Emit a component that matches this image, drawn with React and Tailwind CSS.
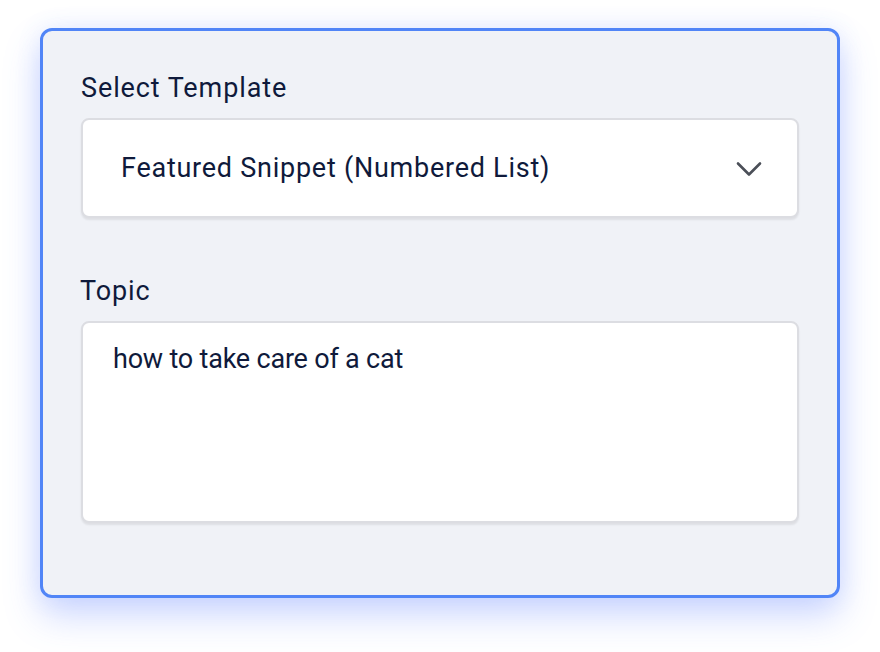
export default function App() {
  return (
    <div className="min-h-[652px] w-[880px] bg-white pt-[28px] px-[40px]" style={{ fontFamily: 'Roboto, "Liberation Sans", sans-serif' }}>
      <div className="h-[570px] rounded-[12px] border-[3px] border-[#5185f7] bg-[#f0f2f7] px-[38px] pt-[41px] shadow-[0_18px_36px_rgba(82,120,255,0.28),0_0_24px_rgba(82,120,255,0.12)]">
        <label className="block text-[27px] font-normal leading-[32px] tracking-[0.9px] text-[#0f1a3b]">Select Template</label>
        <div className="mt-[14px] flex h-[100px] items-center justify-between rounded-[8px] border-2 border-[#dcdde2] bg-white pl-[38px] pr-[35px] shadow-[0_2px_2px_rgba(0,0,0,0.08)]">
          <span className="text-[27px] leading-[32px] tracking-[0.75px] text-[#0f1a3b]">Featured Snippet (Numbered List)</span>
          <svg width="26" height="16" viewBox="0 0 26 16" fill="none" className="mt-[2px]">
            <path d="M2 2.5 L13 13.5 L24 2.5" stroke="#4b4f58" strokeWidth="2.6" strokeLinecap="round" strokeLinejoin="round" />
          </svg>
        </div>
        <label className="mt-[57px] block text-[27px] font-normal leading-[32px] tracking-[0.9px] text-[#0f1a3b] -ml-px">Topic</label>
        <div className="mt-[14px] h-[202px] rounded-[8px] border-2 border-[#dcdde2] bg-white pl-[30px] pt-[20px] shadow-[0_2px_2px_rgba(0,0,0,0.08)]">
          <p className="text-[27px] leading-[32px] tracking-[-0.2px] text-[#0f1a3b]">how to take care of a cat</p>
        </div>
      </div>
    </div>
  );
}
